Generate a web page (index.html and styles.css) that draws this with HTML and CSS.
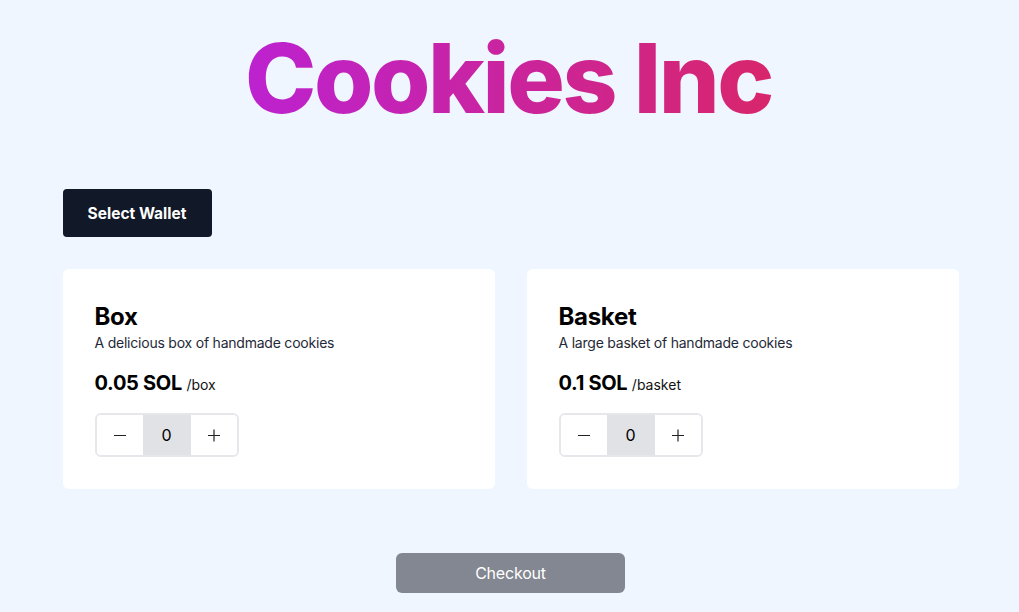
FILE: index.html
```html
<!DOCTYPE html>
<html lang="en">
<head>
<meta charset="utf-8">
<title>Cookies Inc</title>
<link rel="stylesheet" href="styles.css">
</head>
<body>
<main class="page">
  <h1 class="title"><span class="title-text">Cookies Inc</span></h1>
  <div class="container">
    <button class="wallet-btn">Select Wallet</button>
    <div class="cards">
      <div class="card">
        <h2 class="card-title">Box</h2>
        <p class="card-desc">A delicious box of handmade cookies</p>
        <p class="price"><span class="price-amount">0.05 SOL</span> <span class="price-unit">/box</span></p>
        <div class="counter">
          <button class="counter-btn" aria-label="decrease"><svg width="14" height="14" viewBox="0 0 14 14"><line x1="1" y1="7.5" x2="13" y2="7.5" stroke="#222" stroke-width="1.2"/></svg></button>
          <span class="counter-value">0</span>
          <button class="counter-btn" aria-label="increase"><svg width="14" height="14" viewBox="0 0 14 14"><line x1="1" y1="7.5" x2="13" y2="7.5" stroke="#222" stroke-width="1.2"/><line x1="7" y1="1.5" x2="7" y2="13.5" stroke="#222" stroke-width="1.2"/></svg></button>
        </div>
      </div>
      <div class="card">
        <h2 class="card-title">Basket</h2>
        <p class="card-desc">A large basket of handmade cookies</p>
        <p class="price"><span class="price-amount">0.1 SOL</span> <span class="price-unit">/basket</span></p>
        <div class="counter">
          <button class="counter-btn" aria-label="decrease"><svg width="14" height="14" viewBox="0 0 14 14"><line x1="1" y1="7.5" x2="13" y2="7.5" stroke="#222" stroke-width="1.2"/></svg></button>
          <span class="counter-value">0</span>
          <button class="counter-btn" aria-label="increase"><svg width="14" height="14" viewBox="0 0 14 14"><line x1="1" y1="7.5" x2="13" y2="7.5" stroke="#222" stroke-width="1.2"/><line x1="7" y1="1.5" x2="7" y2="13.5" stroke="#222" stroke-width="1.2"/></svg></button>
        </div>
      </div>
    </div>
    <div class="checkout-row">
      <button class="checkout-btn">Checkout</button>
    </div>
  </div>
</main>
</body>
</html>
```
FILE: styles.css
```css
* { box-sizing: border-box; }
html, body { margin: 0; padding: 0; }
body {
  background: #eff6ff;
  font-family: "Inter", "Liberation Sans", sans-serif;
  color: #000;
  min-height: 612px;
}
.page {
  padding-top: 30px;
}
.title {
  margin: 0;
  text-align: center;
  font-size: 96px;
  line-height: 96px;
  font-weight: 800;
  letter-spacing: -2.4px;
}
.title-text {
  display: inline-block;
  padding-right: 2px;
  background: linear-gradient(to right, #bc22d0, #d8266b);
  -webkit-background-clip: text;
  background-clip: text;
  color: transparent;
}
.container {
  width: 896px;
  margin: 63px auto 0;
  position: relative;
  left: 1px;
}
.wallet-btn {
  display: block;
  height: 48px;
  padding: 0 20px;
  border: none;
  border-radius: 4px;
  background: #111827;
  color: #fff;
  font-family: "Inter", "Liberation Sans", sans-serif;
  font-weight: 700;
  font-size: 15.5px;
  width: 149px;
}
.cards {
  display: grid;
  grid-template-columns: 1fr 1fr;
  gap: 32px;
  margin-top: 32px;
}
.card {
  background: #fff;
  border-radius: 6px;
  padding: 32px;
  height: 220px;
}
.card-title {
  margin: 0;
  font-size: 24px;
  line-height: 32px;
  font-weight: 700;
  letter-spacing: -0.3px;
}
.card-desc {
  margin: 0;
  font-size: 14px;
  line-height: 20px;
  letter-spacing: -0.22px;
  color: #1f2937;
}
.price {
  margin: 16px 0 0;
  height: 28px;
  line-height: 28px;
}
.price-amount {
  font-size: 20px;
  font-weight: 700;
  letter-spacing: -0.3px;
}
.price-unit {
  font-size: 14px;
  line-height: 1;
  color: #111;
}
.counter {
  margin-top: 16px;
  display: inline-grid;
  vertical-align: top;
  grid-template-columns: 46px 48px 46px;
  height: 44px;
  border: 2px solid #e5e7eb;
  border-radius: 6px;
  overflow: hidden;
}
.counter-btn {
  border: none;
  background: #fff;
  padding: 0;
  display: flex;
  align-items: center;
  justify-content: center;
}
.counter-value {
  background: #e1e2e6;
  display: flex;
  align-items: center;
  justify-content: center;
  font-size: 16px;
}
.checkout-row {
  display: flex;
  justify-content: center;
  margin-top: 64px;
}
.checkout-btn {
  width: 229px;
  height: 40px;
  border: none;
  border-radius: 6px;
  background: #828791;
  color: #fff;
  font-family: "Inter", "Liberation Sans", sans-serif;
  font-size: 16px;
  letter-spacing: -0.2px;
}
```
